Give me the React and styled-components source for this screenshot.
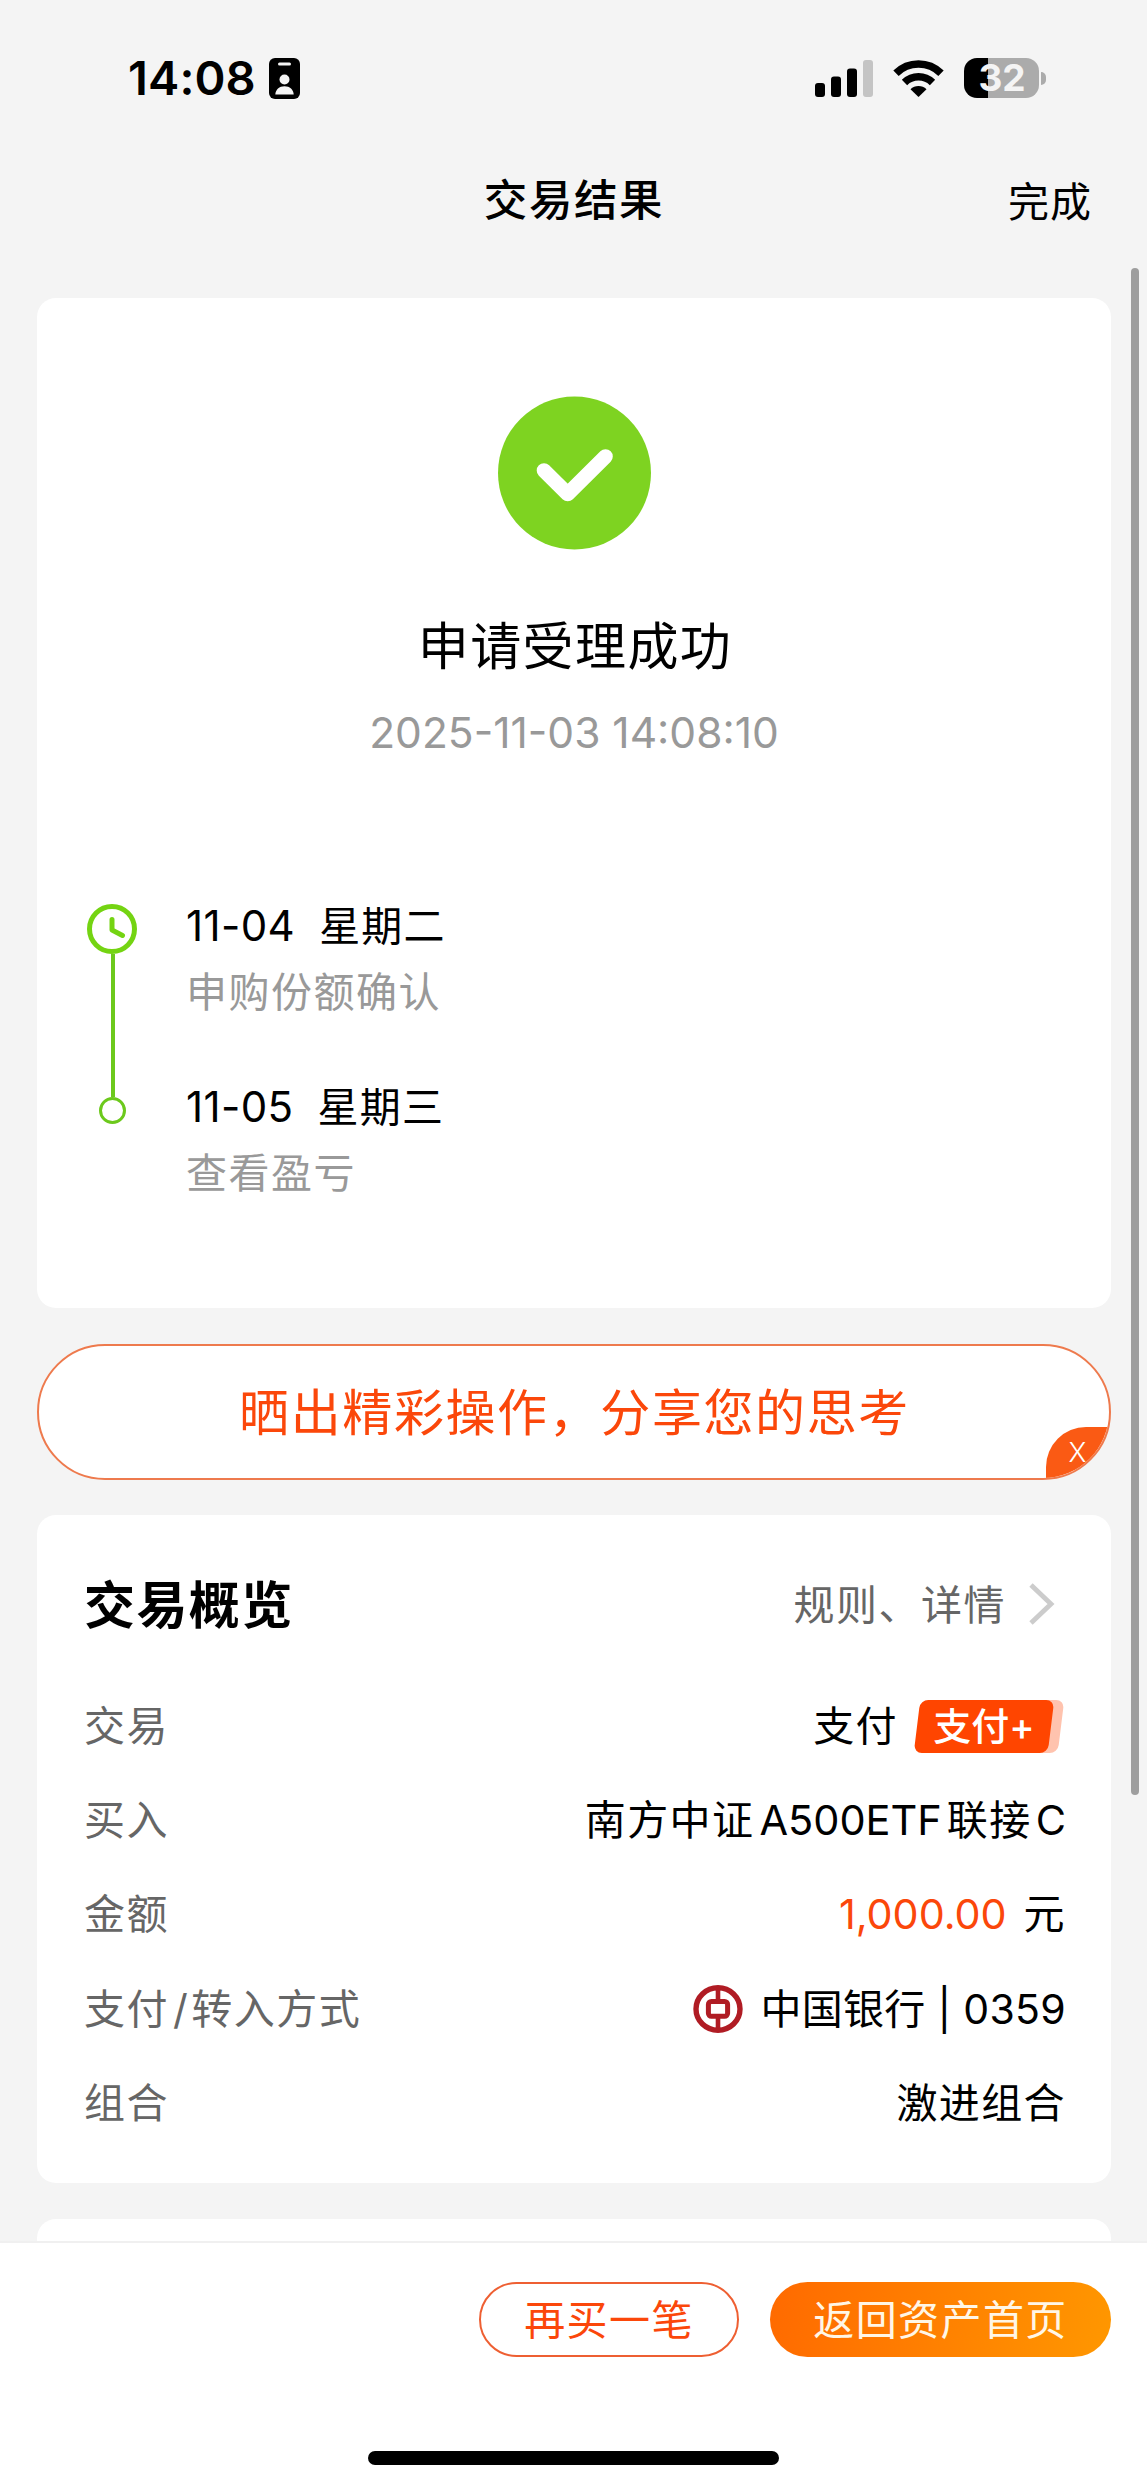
import React from "react";
import styled, { createGlobalStyle } from "styled-components";

const ORANGE = "#fb470a";
const GREEN = "#7ed321";
const MUTED = "#999999";
const LABEL = "#666666";

const GlobalStyle = createGlobalStyle`
  * {
    box-sizing: border-box;
  }

  body {
    margin: 0;
    background: #f4f4f4;
    font-family: Inter, "Noto Sans CJK SC", sans-serif;
    color: #000;
  }
`;

const Screen = styled.div`
  display: flex;
  flex-direction: column;
  position: relative;
  width: 1147px;
  height: 2486px;
  overflow: hidden;
  background: #f4f4f4;
`;

const StatusBar = styled.header`
  display: flex;
  justify-content: space-between;
  align-items: center;
  flex: none;
  height: 156px;
  padding: 0 101px 0 128px;
`;

const StatusGroup = styled.div`
  display: flex;
  align-items: center;
  gap: ${({ $gap }) => $gap}px;
`;

const Clock = styled.span`
  font-size: 47px;
  font-weight: 600;
  line-height: 60px;
  letter-spacing: 0.1px;
`;

const Battery = styled.div`
  display: flex;
  align-items: center;
  gap: 2px;

  .cell {
    display: flex;
    justify-content: center;
    align-items: center;
    width: 75px;
    height: 40px;
    padding-left: 1px;
    border-radius: 13px;
    background: linear-gradient(90deg, #000 24px, #ababab 24px);
    color: #f4f4f4;
    font-size: 37px;
    font-weight: 700;
    line-height: 40px;
  }

  .cap {
    width: 5px;
    height: 13px;
    border-radius: 0 6px 6px 0;
    background: #ababab;
  }
`;

const NavBar = styled.nav`
  display: grid;
  grid-template-columns: 1fr auto 1fr;
  align-items: center;
  flex: none;
  height: 91px;
  padding: 0 55px;
`;

const NavTitle = styled.h1`
  grid-column: 2;
  margin: 0;
  padding: 0 0 3px 1px;
  font-size: 43.5px;
  font-weight: 500;
  line-height: 60px;
  letter-spacing: 1.6px;
`;

const NavAction = styled.span`
  justify-self: end;
  padding-top: 1px;
  font-size: 41px;
  line-height: 60px;
  letter-spacing: 1px;
`;

const Content = styled.main`
  display: flex;
  flex-direction: column;
  flex: 1;
  min-height: 0;
  padding: 51px 36px 0 37px;
  overflow: hidden;
`;

const Card = styled.section`
  flex: none;
  height: ${({ $height }) => $height}px;
  margin-top: ${({ $gap }) => $gap || 0}px;
  border-radius: 19px;
  background: #fff;
`;

const ResultHead = styled.div`
  display: flex;
  flex-direction: column;
  align-items: center;
  padding-top: 98px;

  h2 {
    margin: 61px 0 0;
    padding-left: 2px;
    font-size: 51px;
    font-weight: 400;
    line-height: 72px;
    letter-spacing: 1.4px;
  }

  time {
    margin-top: 20px;
    color: ${MUTED};
    font-size: 42.5px;
    line-height: 60px;
  }
`;

const Timeline = styled.div`
  display: flex;
  padding: 131px 0 0 50px;
`;

const Rail = styled.div`
  display: flex;
  flex-direction: column;
  align-items: center;
  width: 50px;
  padding-top: 10px;

  .line {
    width: 4px;
    height: 143px;
    margin-left: 2px;
    background: #6cc91c;
  }

  .dot {
    width: 27px;
    height: 27px;
    border: 3px solid #6cc91c;
    border-radius: 50%;
  }
`;

const Steps = styled.div`
  display: flex;
  flex-direction: column;
  gap: 49px;
  margin: -1px 0 0 49px;
`;

const Step = styled.div`
  font-size: 41px;
  line-height: 66px;

  .date {
    display: flex;
    gap: 24px;
  }

  .day {
    font-size: 42px;
    letter-spacing: 0.4px;
  }

  .weekday {
    letter-spacing: 1.2px;
  }

  .note {
    color: ${MUTED};
    letter-spacing: 1.5px;
  }
`;

const ShareBanner = styled.button`
  display: flex;
  justify-content: center;
  align-items: center;
  position: relative;
  flex: none;
  height: 136px;
  margin: 36px 0 35px;
  padding: 0 0 6px 1px;
  border: 2px solid #ee7a4d;
  border-radius: 68px;
  overflow: hidden;
  background: #fff;
  color: ${ORANGE};
  font-family: inherit;
  font-size: 50px;
  letter-spacing: 1.6px;
`;

const CloseCorner = styled.span`
  display: flex;
  justify-content: center;
  align-items: center;
  position: absolute;
  right: -2px;
  bottom: -2px;
  width: 65px;
  height: 53px;
  padding: 0 2px 3px 0;
  border-radius: 40px 0 0 0;
  background: #fa5a14;
  color: #fff;
  font-size: 27px;
  font-weight: 300;
  letter-spacing: 0;
`;

const OverviewHead = styled.div`
  display: flex;
  justify-content: space-between;
  align-items: center;
  height: 164px;
  padding: 10px 56px 0 47px;

  h2 {
    margin: 0;
    font-size: 51px;
    font-weight: 700;
    letter-spacing: 1.4px;
  }

  a {
    display: flex;
    align-items: center;
    gap: 23px;
    color: ${LABEL};
    font-size: 41px;
    letter-spacing: 1.5px;
  }

  svg {
    margin-top: 4px;
  }
`;

const Row = styled.div`
  display: flex;
  justify-content: space-between;
  align-items: center;
  height: 94.2px;
  padding: 0 45px 0 47px;
  font-size: 41px;
  line-height: 60px;

  .label {
    color: ${LABEL};
    letter-spacing: 1.5px;
  }

  .value {
    display: flex;
    align-items: center;
    letter-spacing: 1.4px;
  }
`;

const Latin = styled.span`
  margin: ${({ $margin }) => $margin};
  font-size: 41.5px;
  letter-spacing: 0;
`;

const Slash = styled.span`
  margin: 0 2px 0 4px;
`;

const Account = styled.span`
  margin-left: 17px;
  letter-spacing: 0.3px;
`;

const Amount = styled.span`
  margin-right: 17px;
  color: ${ORANGE};
  font-size: 41.3px;
  letter-spacing: 0;
`;

const PayTag = styled.span`
  display: flex;
  justify-content: center;
  align-items: center;
  position: relative;
  width: 140px;
  height: 53px;
  margin: 0 12px 0 16px;
  color: #fff;
  font-size: 38px;
  font-weight: 500;
  letter-spacing: 0;
  z-index: 0;

  &::before,
  &::after {
    content: "";
    position: absolute;
    top: 0;
    bottom: 0;
    left: 3px;
    right: 3px;
    border-radius: 8px;
    transform: skewX(-7deg);
    background: #ff4500;
    z-index: -1;
  }

  &::before {
    left: 13px;
    right: -7px;
    background: #ffc3ae;
    z-index: -2;
  }
`;

const BottomBar = styled.footer`
  display: flex;
  flex-direction: column;
  align-items: center;
  flex: none;
  height: 245px;
  border-top: 2px solid #f0f0f0;
  background: #fff;
`;

const Actions = styled.div`
  display: flex;
  justify-content: flex-end;
  align-self: stretch;
  gap: 31px;
  padding: 39px 36px 0 0;
`;

const ActionButton = styled.button`
  width: ${({ $width }) => $width}px;
  height: 75px;
  padding: 0 0 5px;
  border: ${({ $primary }) => ($primary ? "none" : "2px solid #ee5f32")};
  border-radius: 38px;
  background: ${({ $primary }) =>
    $primary ? "linear-gradient(100deg, #ff6a00, #ff9700)" : "#fff"};
  color: ${({ $primary }) => ($primary ? "#fff6e6" : ORANGE)};
  font-family: inherit;
  font-size: 41px;
  letter-spacing: 1.4px;
`;

const HomeIndicator = styled.div`
  width: 411px;
  height: 14px;
  margin-top: 94px;
  border-radius: 7px;
  background: #000;
`;

const ScrollThumb = styled.div`
  position: absolute;
  top: 268px;
  right: 8px;
  width: 8px;
  height: 1527px;
  border-radius: 4px;
  background: #9e9e9e;
`;

const BadgeIcon = () => (
  <svg width="31" height="41" viewBox="0 0 31 41">
    <rect width="31" height="41" rx="6" />
    <rect x="9" y="4.5" width="13" height="3" rx="1.5" fill="#f4f4f4" />
    <circle cx="15.5" cy="21.5" r="5" fill="#f4f4f4" />
    <path d="M6.3 36.5c.2-5 4-8.3 9.2-8.3s9 3.3 9.2 8.3z" fill="#f4f4f4" />
  </svg>
);

const SignalIcon = () => (
  <svg width="58" height="37" viewBox="0 0 58 37">
    <rect x="0" y="23" width="10" height="14" rx="3" />
    <rect x="16" y="16.5" width="10" height="20.5" rx="3" />
    <rect x="32" y="8.5" width="10" height="28.5" rx="3" />
    <rect x="48" y="0" width="10" height="37" rx="3" fill="#c4c4c4" />
  </svg>
);

const WifiIcon = () => (
  <svg width="51" height="37" viewBox="0 0 51 37">
    <path d="M3 13.2A32 32 0 0 1 48 13.2" fill="none" stroke="#000" strokeWidth="7.6" />
    <path d="M11.5 22.5A20 20 0 0 1 39.5 22.5" fill="none" stroke="#000" strokeWidth="7.6" />
    <path d="M17.5 29.3A11.5 11.5 0 0 1 33.5 29.3L25.5 37Z" />
  </svg>
);

const SuccessIcon = () => (
  <svg width="154" height="154" viewBox="0 0 154 154">
    <circle cx="77.5" cy="77" r="76.5" fill={GREEN} />
    <path
      d="M47 74.5L70.7 98L108.500 60.5"
      fill="none"
      stroke="#fff"
      strokeWidth="14.6"
      strokeLinecap="round"
      strokeLinejoin="round"
    />
  </svg>
);

const ClockIcon = () => (
  <svg width="50" height="50" viewBox="0 0 50 50" fill="none" stroke="#74d412">
    <circle cx="25" cy="25" r="22.5" strokeWidth="5" />
    <path d="M25 15.5V26L35.5 31.5" strokeWidth="5" strokeLinecap="round" strokeLinejoin="round" />
  </svg>
);

const ChevronIcon = () => (
  <svg width="26" height="42" viewBox="0 0 26 42">
    <path d="M2 2L22 21L2 40" fill="none" stroke="#cccccc" strokeWidth="4.8" />
  </svg>
);

const BankLogo = () => (
  <svg width="50" height="48" viewBox="0 0 50 48" fill="none" stroke="#b01c24">
    <ellipse cx="25" cy="24" rx="22" ry="21.3" strokeWidth="5.4" />
    <path d="M25 4V16M25 32V44" strokeWidth="4.6" />
    <rect x="15.4" y="16.5" width="19.2" height="14.8" rx="3" strokeWidth="5" />
  </svg>
);

const steps = [
  { date: "11-04", weekday: "星期二", note: "申购份额确认" },
  { date: "11-05", weekday: "星期三", note: "查看盈亏" }
];

const App = () => (
  <>
    <GlobalStyle />
    <Screen>
      <StatusBar>
        <StatusGroup $gap={13}>
          <Clock>14:08</Clock>
          <BadgeIcon />
        </StatusGroup>
        <StatusGroup $gap={20}>
          <SignalIcon />
          <WifiIcon />
          <Battery>
            <span className="cell">32</span>
            <span className="cap" />
          </Battery>
        </StatusGroup>
      </StatusBar>

      <NavBar>
        <NavTitle>交易结果</NavTitle>
        <NavAction>完成</NavAction>
      </NavBar>

      <Content>
        <Card $height={1010}>
          <ResultHead>
            <SuccessIcon />
            <h2>申请受理成功</h2>
            <time>2025-11-03 14:08:10</time>
          </ResultHead>
          <Timeline>
            <Rail>
              <ClockIcon />
              <span className="line" />
              <span className="dot" />
            </Rail>
            <Steps>
              {steps.map(({ date, weekday, note }) => (
                <Step key={date}>
                  <div className="date">
                    <span className="day">{date}</span>
                    <span className="weekday">{weekday}</span>
                  </div>
                  <div className="note">{note}</div>
                </Step>
              ))}
            </Steps>
          </Timeline>
        </Card>

        <ShareBanner>
          晒出精彩操作，分享您的思考
          <CloseCorner>X</CloseCorner>
        </ShareBanner>

        <Card $height={668}>
          <OverviewHead>
            <h2>交易概览</h2>
            <a>
              规则、详情
              <ChevronIcon />
            </a>
          </OverviewHead>
          <Row>
            <span className="label">交易</span>
            <span className="value">
              支付
              <PayTag>支付+</PayTag>
            </span>
          </Row>
          <Row>
            <span className="label">买入</span>
            <span className="value">
              南方中证<Latin $margin="0 5px">A500ETF</Latin>联接<Latin $margin="0 0 0 4px">C</Latin>
            </span>
          </Row>
          <Row>
            <span className="label">金额</span>
            <span className="value">
              <Amount>1,000.00</Amount>元
            </span>
          </Row>
          <Row>
            <span className="label">
              支付<Slash>/</Slash>转入方式
            </span>
            <span className="value">
              <BankLogo />
              <Account>中国银行 | 0359</Account>
            </span>
          </Row>
          <Row>
            <span className="label">组合</span>
            <span className="value">激进组合</span>
          </Row>
        </Card>

        <Card $height={120} $gap={36} />
      </Content>

      <BottomBar>
        <Actions>
          <ActionButton $width={260}>再买一笔</ActionButton>
          <ActionButton $width={341} $primary>
            返回资产首页
          </ActionButton>
        </Actions>
        <HomeIndicator />
      </BottomBar>
      <ScrollThumb />
    </Screen>
  </>
);

export default App;
